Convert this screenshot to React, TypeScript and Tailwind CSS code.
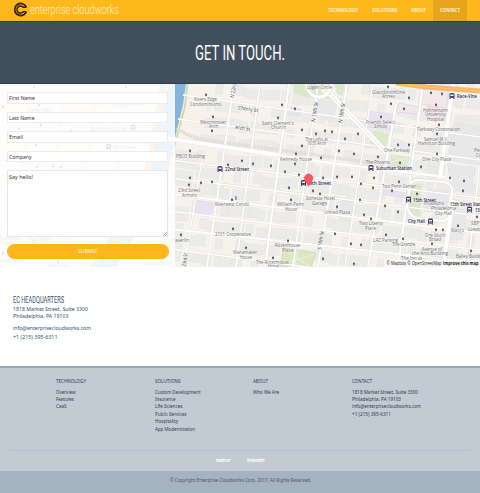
import { useLayoutEffect, useRef, useState } from "react";
import { clsx } from "clsx";

/** A single line of text, condensed or widened to a set measure. */
function Line({ text, w, className }: { text: string; w: number; className?: string }) {
  const ref = useRef<HTMLSpanElement>(null);
  const [scale, setScale] = useState(1);
  useLayoutEffect(() => {
    const el = ref.current;
    if (el && el.offsetWidth) setScale(w / parseFloat(getComputedStyle(el).width));
  }, [text, w]);
  return (
    <span className={clsx("block shrink-0 whitespace-nowrap", className)} style={{ width: w }}>
      <span ref={ref} className="inline-block origin-left align-top" style={{ transform: `scaleX(${scale})` }}>
        {text}
      </span>
    </span>
  );
}

type Seg = [number, number, number, number, number];

const streets: Seg[] = [
  [183, 95, 480, 137, 1.5],
  [178, 119, 480, 160, 1.5],
  [170, 160, 480, 198, 1.6],
  [170, 178, 480, 216, 1.6],
  [170, 194, 480, 233, 2],
  [170, 211, 480, 250, 1.5],
  [170, 229, 480, 263, 2],
  [170, 249, 330, 270, 1.5],
  [234, 84, 207, 267, 1.8],
  [260, 84, 236, 267, 1.6],
  [289, 84, 265, 267, 2],
  [318, 84, 293, 267, 1.6],
  [347, 84, 318, 267, 2],
  [373, 84, 345, 267, 1.5],
  [396, 105, 368, 267, 2],
  [423, 84, 398, 267, 2],
  [479, 170, 468, 267, 1.5],
  [205, 142, 184, 267, 1.4],
];

const labels: [string, number, number, number, boolean?][] = [
  ["Rivers Edge", 194, 101, 23],
  ["Condominiums", 190, 106, 31],
  ["Westminster", 200, 123.5, 26],
  ["Arch", 209, 128, 9],
  ["Saint Clement's", 262, 124.5, 32],
  ["Church", 271, 129, 15],
  ["PECO Building", 176, 157.5, 29],
  ["The Lofts at", 305, 140.5, 23],
  ["1835 Arch", 307, 145, 19],
  ["Kennedy House", 280, 161, 32],
  ["Logan Circle", 307, 88.5, 25],
  ["GlaxoSmithKline", 372, 93.5, 33],
  ["Annex", 382, 98, 13],
  ["Hahnemann", 423, 111.5, 25],
  ["University", 425, 116, 21],
  ["Hospital", 427, 120.5, 17],
  ["Friends Select", 366, 123.5, 29],
  ["School", 374, 128, 13],
  ["Parkway Corporation", 417, 131, 43],
  ["Samuel M.V.", 424, 140.5, 24],
  ["Hamilton Building", 418, 145, 37],
  ["One Parkway", 384, 151.5, 26],
  ["One City Plaza", 422, 160.5, 29],
  ["The Phoenix", 366, 163.5, 24],
  ["Pennsylvania", 474, 152, 28],
  ["Convention", 476, 157, 23],
  ["23rd Street", 178, 192, 22],
  ["Armory", 182, 196.5, 15],
  ["Riverwest Condo", 215, 206, 34],
  ["William Penn", 277, 206, 27],
  ["House", 285, 210.5, 12],
  ["Sonesta Hotel", 306, 199.5, 29],
  ["Garage", 312, 204.5, 15],
  ["2101 Cooperative", 215, 235.5, 36],
  ["Haverlin", 172, 241.5, 17],
  ["Wanamaker", 233, 254, 24],
  ["House", 240, 258.5, 12],
  ["Rittenhouse", 275, 247, 25],
  ["Plaza", 282, 251.5, 11],
  ["The Rittenhouse", 256, 263.5, 33],
  ["Hotel", 268, 268, 11],
  ["Two Penn Center", 382, 188, 34],
  ["United Plaza", 324, 214, 26],
  ["Two Liberty", 359, 225, 24],
  ["Place", 365, 229.5, 11],
  ["Philadelphia", 424, 205, 20],
  ["Philadelphia", 431, 210, 25],
  ["City Hall", 435, 214.5, 17],
  ["LAZ Parking", 373, 242, 25],
  ["The Grande", 392, 246, 23],
  ["One South", 425, 236.5, 20],
  ["Broad", 429, 241, 12],
  ["Avenue of", 422, 250.5, 20],
  ["the Arts Building", 412, 254.8, 36],
  ["The Inn at", 401, 259.8, 21],
  ["Bailey Building", 456, 257.5, 29],
  ["Macy's", 451, 231.5, 13],
  ["SEPTA", 471, 224.5, 14],
  ["Loews Hotel", 468, 231, 25],
  ["30th Street Station", 89, 130.5, 38],
  ["30th Street", 113, 149, 23],
  ["Cira Centre", 113, 105.5, 30],
  ["Cohen Hall", 27, 112, 24],
  ["Levy Tennis", 28, 240.5, 25],
  ["Pavilion", 32, 245, 17],
  ["Shoemaker", -3, 240, 23],
  ["Green", 3, 244.5, 12],
  ["UNIVERSITY", -3, 263, 28],
  ["Penn Park", 48, 267.5, 20],
  ["Locust on the", 145, 264.5, 27],
  ["22nd Street", 225, 171, 24, true],
  ["19th Street", 307, 184.8, 24, true],
  ["Suburban Station", 376, 170, 36, true],
  ["15th Street", 413, 201.5, 23, true],
  ["13th Street Station", 450, 206, 37, true],
  ["13th", 475, 211.5, 9, true],
  ["City Hall", 408, 223, 17, true],
  ["Race-Vine", 457, 97.5, 20, true],
];

const dots = [
  [206, 95], [213, 117], [212, 131], [282, 105], [295, 109], [278, 118], [316, 134], [325, 131], [302, 130], [190, 151],
  [228, 165], [242, 161], [253, 164], [271, 166], [296, 154], [302, 146], [321, 158], [295, 164], [285, 172], [299, 175],
  [190, 178], [323, 178], [388, 87], [391, 104], [409, 98], [431, 93], [442, 94], [436, 105], [404, 109], [381, 117],
  [332, 132], [345, 139], [358, 134], [339, 151], [354, 154], [378, 157], [398, 145], [409, 145], [439, 125],
  [437, 134], [437, 154], [400, 163], [421, 167], [337, 177], [352, 177], [374, 178], [450, 178], [189, 185], [201, 183],
  [212, 182], [232, 200], [291, 200], [289, 188], [313, 191], [320, 194], [181, 235], [233, 229], [246, 248], [288, 241],
  [273, 258], [323, 259], [361, 184], [373, 188], [399, 182], [392, 191], [417, 194], [360, 200], [385, 206],
  [371, 219], [386, 235], [403, 239], [398, 212], [364, 215], [436, 230], [443, 230], [458, 226], [432, 244], [471, 251],
  [477, 217], [464, 181], [463, 191], [354, 264], [361, 245], [351, 244], [335, 234], [337, 207], [34, 87], [126, 87],
  [3, 107], [39, 105], [19, 129], [41, 125], [36, 145], [37, 167], [53, 166], [61, 167], [71, 131], [3, 253], [58, 262],
];

// Footprints follow the tilted street grid; their sizes vary with the row and column.
const buildings = Array.from({ length: 13 * 34 }, (_, n) => {
  const col = n % 34;
  const row = Math.floor(n / 34);
  const k = (n * 73 + row * 31) % 17;
  return { x: 196 + col * 9.6 + (k % 2), y: 62 + row * 17.1 + (k % 3), w: 7 + (k % 4), h: 10 + ((k * 5) % 5), skip: k === 4 || k === 11 };
});

function Station({ x, y }: { x: number; y: number }) {
  return (
    <g transform={`translate(${x} ${y})`} fill="#34345e">
      <path fillRule="evenodd" d="M-2.5-1.8Q-2.5-3 0-3T2.5-1.8V2H-2.5ZM-1.6-1.5V.1H1.6V-1.5ZM-1.6.8V1.4H-.8V.8ZM.8.8V1.4H1.6V.8Z" />
      <path d="M-2 2H-1L-1.6 3H-2.8ZM1 2H2L2.8 3H1.6Z" />
    </g>
  );
}

function CityMap() {
  return (
    <svg viewBox="0 84 480 183" className="block h-[183px] w-[480px]" fontFamily="'Open Sans', sans-serif">
      <rect y="84" width="480" height="183" fill="#f6f2ec" />
      <g transform="rotate(7.2 320 175)" fill="#ebebea" stroke="#e1e0df" strokeWidth=".35">
        {buildings.map((b, i) => (b.skip ? null : <rect key={i} x={b.x} y={b.y} width={b.w} height={b.h} />))}
        <path d="M170 168h26v17h-26zM174 188h20v15h-20zM170 224h24v14h-24zM172 241h19v16h-19zM174 258h18v20h-18z" />
      </g>
      <path d="M187 84H211L203 133L176 127Z" fill="#f6f1e9" />
      <path d="M160 84H186L183 105L173 146L164 196L138 230L116 267H90L112 234L148 200L152 145Z" fill="#86b4dd" />
      <path d="M187.5 84L185 106L175 144L170 165" fill="none" stroke="#c9dda8" strokeWidth="1.8" />
      <path d="M168 84L158 110L146 175L135 220L92 267" fill="none" stroke="#f8b763" strokeWidth="5" />
      <g fill="#e8e8e8" stroke="#dedddc" strokeWidth=".4">
        <path d="M454 123L480 127V165L447 160ZM427 165L438 167L436 178L425 176ZM453 208L467 210L462 240L448 238ZM428 189L449 192L445 214L424 211Z" />
        <path d="M318 100L337 104L333 122L316 117ZM342 200L354 202L350 222L339 220ZM447 164L475 168L472 192L456 190Z" />
      </g>
      <path d="M294 84H319Q320 96 333 98H342V100L330 99L305 97L293 93ZM334 84H344L343 96L337 94ZM373 130L389 134L385 149L369 145ZM391 154L410 157L407 166L389 163ZM411 184L422 184L420 216Q413 217 408 209Z" fill="#dce9c9" />
      <path d="M284 248L316 253L311 267H280Z" fill="#d9e8c2" stroke="#cbdcb5" />
      <path d="M285 250L311 267M282 264L315 254M298 250L294 267M392 156L408 165M391 162L408 158" stroke="#f1f1de" strokeWidth=".9" />
      <path d="M196 200L213 203L210 217L194 214ZM368 111L393 114L390 130L366 127ZM382 189L407 193L405 198L381 194ZM290 107L301 109L299 116L289 114Z" fill="#e7e1f0" stroke="#d9cfe7" strokeWidth=".4" />
      <path d="M424 85L449 88L444 120L428 118L427 105L421 104ZM399 103L419 107L417 114L396 112Z" fill="#efe9eb" stroke="#e8c6d8" strokeWidth=".6" />
      <path d="M428 104L445 107L443 119L426 117Z" fill="#f4dae5" />
      <path d="M177 128Q190 138 207 140L280 150L410 168" fill="none" stroke="#e3ded8" strokeWidth="3.6" strokeDasharray="3 .6" />
      <g fill="none" stroke="#dddbd9">
        {streets.map(([a, b, c, d, w], i) => <path key={i} d={`M${a} ${b}L${c} ${d}`} strokeWidth={w + 0.7} />)}
      </g>
      <g fill="none" stroke="#fff">
        {streets.map(([a, b, c, d, w], i) => <path key={i} d={`M${a} ${b}L${c} ${d}`} strokeWidth={w} />)}
      </g>
      <g fill="none" stroke="#dfddda">
        <path d="M0 120L175 139.5L278 155" strokeWidth="4.8" />
        <path d="M278 155L330 163L446 177" strokeWidth="3.2" />
        <path d="M453 84L440 178M453 200L443 267" strokeWidth="4.8" />
        <path d="M330 94L386 152" strokeWidth="6" />
        <circle cx="319" cy="85" r="12" strokeWidth="3.6" />
        <path d="M407 206L410 186Q411 180 418 180L444 182Q453 184 452 192L449 216Q447 222 441 221L416 218Q408 214 407 206Z" strokeWidth="3" />
      </g>
      <g fill="none" stroke="#fff">
        <path d="M0 120L175 139.5L278 155" strokeWidth="4.1" />
        <path d="M278 155L330 163L446 177" strokeWidth="2.5" />
        <path d="M453 84L440 178M453 200L443 267" strokeWidth="4.1" />
        <path d="M330 94L386 152" strokeWidth="5" />
        <path d="M330 94L386 152" stroke="#d2d0cd" strokeWidth=".7" />
        <circle cx="319" cy="85" r="12" strokeWidth="2.8" />
        <path d="M407 206L410 186Q411 180 418 180L444 182Q453 184 452 192L449 216Q447 222 441 221L416 218Q408 214 407 206Z" strokeWidth="2.2" />
      </g>
      <path d="M396 83L426 87L480 91" fill="none" stroke="#f7b565" strokeWidth="5" />
      <path d="M396 83L426 87L480 91" fill="none" stroke="#fbd29b" strokeWidth=".6" />
      <path d="M235 196H237V200H235Z" fill="#75aee8" />
      <g fill="none" stroke="#d0ccc6" strokeWidth=".8">
        <path d="M0 92L148 111M0 160L140 177M0 190L135 210M0 228L110 246M32 84L12 267M66 84L40 267M98 84L72 267M130 84L112 220" />
      </g>
      <g fill="#46484e">
        {dots.map(([x, y], i) => (
          <path key={i} d={`M${x} ${y + 1.8}L${x - 1} ${y - 0.1}Q${x - 1} ${y - 1.4} ${x} ${y - 1.4}T${x + 1} ${y - 0.1}Z`} />
        ))}
      </g>
      {labels.map(([t, x, y, w, station], i) => (
        <text key={i} x={x} y={y} textLength={w} lengthAdjust="spacingAndGlyphs" fontSize={station ? 4.8 : 4.8}
          fontWeight={station ? 600 : 400} fill={station ? "#24243f" : "#6c6c6c"} stroke="#fff" strokeOpacity=".6" strokeWidth={x < 170 ? 0 : 0.8} paintOrder="stroke">
          {t}
        </text>
      ))}
      <g fontSize="5.3" fontWeight="500" fill="#333" stroke="#fff" strokeWidth=".8" paintOrder="stroke">
        <text transform="translate(238 109.5) rotate(8)" textLength="20" lengthAdjust="spacingAndGlyphs">Cherry St</text>
        <text transform="translate(235 129) rotate(7)" textLength="15" lengthAdjust="spacingAndGlyphs">Arch St</text>
        <text transform="translate(234 98) rotate(-81)" textLength="20" lengthAdjust="spacingAndGlyphs">N 22nd St</text>
        <text transform="translate(315 122) rotate(-81)" textLength="20" lengthAdjust="spacingAndGlyphs">N 19th St</text>
        <text transform="translate(342 123) rotate(-81)" textLength="20" lengthAdjust="spacingAndGlyphs">N 18th St</text>
        <text transform="translate(321 250) rotate(-81)" textLength="19" lengthAdjust="spacingAndGlyphs">S 18th St</text>
        <text transform="translate(185 270) rotate(-81)" textLength="17" lengthAdjust="spacingAndGlyphs">S 23rd St</text>
      </g>
      <Station x={220} y={169} />
      <Station x={303.5} y={183} />
      <Station x={371} y={168} />
      <Station x={452} y={96} />
      <Station x={408.5} y={199.5} />
      <Station x={430.5} y={221.5} />
      <Station x={469.5} y={209.5} />
      <Station x={133} y={127.5} />
      <Station x={108.5} y={147} />
      <path d="M308.5 186.5L305 180.5A4.3 4.3 0 1 1 312.2 180.5Z" fill="#f8565f" stroke="#e24d57" strokeWidth=".4" />
      <rect x="384" y="260" width="96" height="7" fill="#fff" fillOpacity=".5" />
      <g fontSize="5" fill="#222">
        <text x="386.5" y="265.2" textLength="55" lengthAdjust="spacingAndGlyphs">© Mapbox © OpenStreetMap</text>
        <text x="443" y="265.2" textLength="35.5" lengthAdjust="spacingAndGlyphs" fontWeight="700">Improve this map</text>
      </g>
    </svg>
  );
}

const fields: [string, number][] = [["First Name", 26], ["Last Name", 25.5], ["Email", 14], ["Company", 22.5]];

const columns: { title: [string, number]; items: [string, number][] }[] = [
  { title: ["TECHNOLOGY", 30], items: [["Overview", 19.5], ["Features", 18], ["CaaS", 10.5]] },
  {
    title: ["SOLUTIONS", 25.5],
    items: [["Custom Development", 45.5], ["Insurance", 20.5], ["Life Sciences", 27.5], ["Public Services", 31.5], ["Hospitality", 23], ["App Modernization", 40]],
  },
  { title: ["ABOUT", 15], items: [["Who We Are", 26]] },
  {
    title: ["CONTACT", 20],
    items: [["1818 Market Street, Suite 3300", 66], ["Philadelphia, PA 19103", 49], ["info@enterprisecloudworks.com", 69], ["+1 (215) 395-6311", 39]],
  },
];

export default function App() {
  return (
    <div className="flex h-[493px] w-[480px] flex-col overflow-hidden bg-white font-['Noto_Sans',sans-serif] text-[6px] leading-[7.4px] text-[#303c4b]">
      <header className="flex h-[21px] shrink-0 bg-[#ffb81c] pl-[13px] pr-[13px]">
        <svg viewBox="0 0 15 15" className="mt-[2px] h-[15px] w-[15px]" fill="none" stroke="#2b2112">
          <path d="M13.2 5.2A6 6 0 1 0 13.2 9.8" strokeWidth="1.8" />
          <path d="M10.3 5.2A3.6 3.6 0 1 0 10.3 9.8" strokeWidth="1.5" />
          <path d="M9.8 5.4H13.4M9.8 9.6H13.4" strokeWidth="1.4" />
          <path d="M7.2 1V4.5M2.5 3L5 5.3M1 7.5H4.3M2.5 12L5 9.7M7.2 14V10.5" stroke="#9b7119" strokeWidth=".4" />
        </svg>
        <Line text="enterprise cloudworks" w={89} className="ml-[1.5px] font-['Roboto',sans-serif] text-[13.5px] leading-[18px] font-light text-[#fff0c9]" />
        <nav className="ml-auto flex font-semibold leading-[21px] text-[#fff9e8]">
          <Line text="TECHNOLOGY" w={30} className="mr-[13.5px]" />
          <Line text="SOLUTIONS" w={25.5} className="mr-[14px]" />
          <Line text="ABOUT" w={15} className="mr-[7px]" />
          <div className="flex h-[21px] w-[34px] justify-center bg-[#e5a61b]">
            <Line text="CONTACT" w={20} />
          </div>
        </nav>
      </header>
      <section className="flex h-[63px] shrink-0 justify-center border-y border-t-[#27374f] border-b-[#2b3b4d] bg-[#414e5b]">
        <Line text="GET IN TOUCH." w={90} className="font-['Roboto',sans-serif] text-[20.5px] leading-[63px] font-normal text-white" />
      </section>
      <main className="grid h-[183px] shrink-0 grid-cols-[175px_1fr]">
        <div className="col-span-2 col-start-1 row-start-1">
          <CityMap />
        </div>
        <form className="z-10 col-start-1 row-start-1 flex h-[183px] flex-col bg-white/85 pl-[7px] pt-[8px] text-[#333]">
          {fields.map(([f, w]) => (
            <div key={f} className="mb-[8px] h-[11.6px] w-[161px] border border-[#ebebeb] bg-white pl-[1px] leading-[10px]">
              <Line text={f} w={w} />
            </div>
          ))}
          <div className="flex h-[67px] w-[161px] justify-between border border-[#e6e6e6] bg-white pl-[1px] leading-[12px]">
            <Line text="Say hello!" w={24} />
            <svg viewBox="0 0 4 4" className="h-[4px] w-[4px] self-end" stroke="#777" strokeWidth=".6">
              <path d="M0 4L4 0M2 4L4 2" />
            </svg>
          </div>
          <button type="button" className="mt-[7px] flex h-[14.5px] w-[162px] justify-center rounded-full bg-[#ffb51b] leading-[14px] text-[#fff9e8]">
            <Line text="SUBMIT" w={19.5} />
          </button>
        </form>
      </main>
      <section className="h-[99px] shrink-0 pl-[13.3px] pt-[27px] text-[#34516a]">
        <Line text="EC HEADQUARTERS" w={51} className="font-['Roboto',sans-serif] text-[9px] leading-[12px]" />
        <Line text="1818 Market Street, Suite 3300" w={75} className="leading-[7px]" />
        <Line text="Philadelphia, PA 19103" w={55.5} className="leading-[7px]" />
        <Line text="info@enterprisecloudworks.com" w={78} className="mt-[5px]" />
        <Line text="+1 (215) 395-6311" w={44.5} className="mt-[1.3px]" />
      </section>
      <footer className="flex grow flex-col border-t-2 border-[#98a8b5] bg-[#c2cad4]">
        <div className="mx-[10px] grid h-[83px] shrink-0 grid-cols-[98.7px_98.5px_99px_1fr] border-b border-[#b5c0cb] pl-[46px] pt-[10px]">
          {columns.map((c) => (
            <div key={c.title[0]}>
              <Line text={c.title[0]} w={c.title[1]} className="mb-[3.2px]" />
              {c.items.map(([t, w]) => <Line key={t} text={t} w={w} />)}
            </div>
          ))}
        </div>
        <div className="flex h-[19.5px] shrink-0 pl-[215.5px] leading-[18.5px] font-bold text-white">
          <Line text="twitter" w={14.5} className="mr-[17px]" />
          <Line text="linkedin" w={17.5} />
        </div>
        <div className="grow bg-[#a5b2bf] pl-[169.5px] pt-[6.5px] text-[#4c5765]">
          <Line text="© Copyright Enterprise Cloudworks Corp. 2017. All Rights Reserved." w={141} />
        </div>
      </footer>
    </div>
  );
}
